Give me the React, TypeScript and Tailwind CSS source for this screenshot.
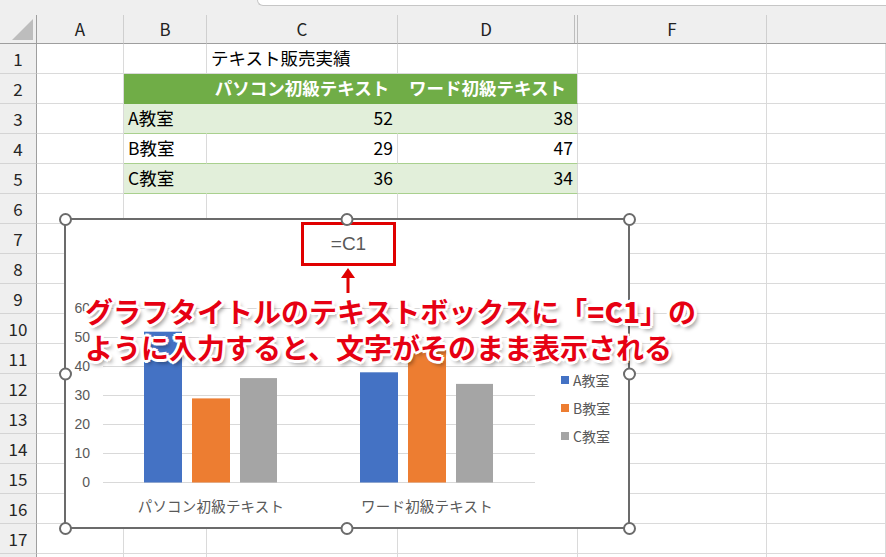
import React from "react";

// 列幅: 行見出し, A, B, C, D(+非表示E), F, G
const GRID = "grid grid-cols-[37px_87px_83px_191px_180px_189px_1fr]";
const JP = "font-['Noto_Sans_CJK_JP',sans-serif]";
const NUM = "font-['Liberation_Sans','Noto_Sans_CJK_JP',sans-serif]";

interface CellDef {
  text?: React.ReactNode;
  align?: "left" | "right" | "center";
  cls?: string;
}

const normal = "border-r border-b border-r-[#dadada] border-b-[#dadada]";
const greenHead =
  "border-r border-b border-r-[#70ad47] border-b-[#70ad47] bg-[#70ad47] text-white font-bold";
const greenHeadEnd =
  "border-r border-b border-r-[#dadada] border-b-[#70ad47] bg-[#70ad47] text-white font-bold";
const lightFill =
  "border-r border-b border-r-[#e2efda] border-b-[#a9d08e] bg-[#e2efda]";
const lightFillEnd =
  "border-r border-b border-r-[#dadada] border-b-[#a9d08e] bg-[#e2efda]";
const whiteRow = "border-r border-b border-r-[#dadada] border-b-[#a9d08e]";

const rows: Record<number, CellDef[]> = {
  1: [{}, {}, { text: "テキスト販売実績" }],
  2: [
    {},
    { cls: greenHead },
    { text: "パソコン初級テキスト", align: "center", cls: greenHead },
    { text: "ワード初級テキスト", align: "center", cls: greenHeadEnd },
  ],
  3: [
    {},
    { text: "A教室", cls: lightFill },
    { text: "52", align: "right", cls: lightFill },
    { text: "38", align: "right", cls: lightFillEnd },
  ],
  4: [
    {},
    { text: "B教室", cls: whiteRow },
    { text: "29", align: "right", cls: whiteRow },
    { text: "47", align: "right", cls: whiteRow },
  ],
  5: [
    {},
    { text: "C教室", cls: lightFill },
    { text: "36", align: "right", cls: lightFill },
    { text: "34", align: "right", cls: lightFillEnd },
  ],
};

const SheetRow = ({ n }: { n: number }) => {
  const defs = rows[n] ?? [];
  return (
    <div className={`${GRID} h-[30px]`}>
      <div className="flex items-center justify-center bg-[#efefef] border-r border-b border-r-[#9e9e9e] border-b-[#d4d4d4] text-[17px] text-[#262626]">
        {n}
      </div>
      {Array.from({ length: 6 }).map((_, i) => {
        const d = defs[i] ?? {};
        const align =
          d.align === "right"
            ? "justify-end pr-[4px]"
            : d.align === "center"
            ? "justify-center"
            : "justify-start pl-[4px]";
        return (
          <div
            key={i}
            className={`flex items-center whitespace-nowrap text-[17.5px] text-black ${align} ${d.cls ?? normal}`}>
            {d.text}
          </div>
        );
      })}
    </div>
  );
};

const ColumnHeader = () => (
  <div className={`${GRID} h-[29px] bg-[#efefef]`}>
    <div className="flex items-end justify-end pr-[3px] pb-[3px] border-r border-b border-r-[#9e9e9e] border-b-[#9e9e9e]">
      <svg width="21" height="21" viewBox="0 0 21 21">
        <polygon points="21,0 21,21 0,21" fill="#bdbdbd" />
      </svg>
    </div>
    {["A", "B", "C"].map((c) => (
      <div
        key={c}
        className="flex items-center justify-center border-r border-b border-r-[#cfcfcf] border-b-[#9e9e9e] text-[17px] text-[#222]">
        {c}
      </div>
    ))}
    {/* D と非表示の E */}
    <div className="flex border-r border-b border-r-[#bdbdbd] border-b-[#9e9e9e] text-[17px] text-[#222]">
      <div className="flex-1 flex items-center justify-center">D</div>
      <div className="w-px bg-[#bdbdbd]" />
      <div className="w-[2px]" />
    </div>
    <div className="flex items-center justify-center border-r border-b border-r-[#cfcfcf] border-b-[#9e9e9e] text-[17px] text-[#222]">
      F
    </div>
    <div className="border-b border-b-[#9e9e9e]" />
  </div>
);

const bars = [
  { x: 41, v: 52, c: "#4472c4" },
  { x: 89, v: 29, c: "#ed7d31" },
  { x: 137, v: 36, c: "#a5a5a5" },
  { x: 257, v: 38, c: "#4472c4" },
  { x: 305, v: 47, c: "#ed7d31" },
  { x: 353, v: 34, c: "#a5a5a5" },
];

const legend = [
  { label: "A教室", c: "bg-[#4472c4]" },
  { label: "B教室", c: "bg-[#ed7d31]" },
  { label: "C教室", c: "bg-[#a5a5a5]" },
];

const Handle = ({ pos }: { pos: string }) => (
  <div
    className={`absolute w-[13px] h-[13px] rounded-full border-2 border-[#6b6b6b] bg-white ${pos}`}
  />
);

const Chart = () => (
  <div className="absolute left-[64px] top-[218px] w-[566px] h-[311px] border-2 border-[#6b6b6b] bg-white">
    {/* グラフタイトル */}
    <div className="flex justify-center pt-[2px] pl-[3px]">
      <div className={`w-[95px] h-[44px] border-[3px] border-[#e00000] flex items-center justify-center text-[19px] text-[#595959] ${NUM}`}>
        =C1
      </div>
    </div>

    <div className="flex mt-[28px]">
      {/* 縦軸 */}
      <div className={`w-[24px] flex flex-col text-right text-[14px] text-[#595959] ${NUM}`}>
        {[60, 50, 40, 30, 20, 10, 0].map((v) => (
          <div key={v} className="h-[29px] leading-[29px]">
            {v}
          </div>
        ))}
      </div>
      <svg width="432" height="200" className="ml-[13px]">
        {[0, 1, 2, 3, 4, 5, 6].map((k) => (
          <line
            key={k}
            x1="0"
            x2="432"
            y1={14.5 + 29 * k}
            y2={14.5 + 29 * k}
            stroke="#d9d9d9"
            strokeWidth="1"
          />
        ))}
        {bars.map((b, i) => (
          <rect
            key={i}
            x={b.x}
            y={188.5 - b.v * 2.9}
            width={i % 3 === 2 ? 37 : 38}
            height={b.v * 2.9}
            fill={b.c}
          />
        ))}
      </svg>
      {/* 凡例 */}
      <div className={`ml-[26px] mt-[72px] flex flex-col ${JP}`}>
        {legend.map((l) => (
          <div key={l.label} className="h-[28px] flex items-center gap-[4px] text-[14px] text-[#595959]">
            <span className={`w-[8px] h-[8px] ${l.c}`} />
            <span>{l.label}</span>
          </div>
        ))}
      </div>
    </div>

    {/* 項目軸 */}
    <div className={`flex pl-[37px] text-[14.5px] text-[#595959] tracking-[0.2px] ${JP}`}>
      <div className="w-[216px] h-[18px] leading-[18px] text-center">パソコン初級テキスト</div>
      <div className="w-[216px] h-[18px] leading-[18px] text-center">ワード初級テキスト</div>
    </div>

    <Handle pos="left-[-7.5px] top-[-7.5px]" />
    <Handle pos="left-1/2 -translate-x-1/2 top-[-7.5px]" />
    <Handle pos="right-[-7.5px] top-[-7.5px]" />
    <Handle pos="left-[-7.5px] top-1/2 -translate-y-1/2" />
    <Handle pos="right-[-7.5px] top-1/2 -translate-y-1/2" />
    <Handle pos="left-[-7.5px] bottom-[-7.5px]" />
    <Handle pos="left-1/2 -translate-x-1/2 bottom-[-7.5px]" />
    <Handle pos="right-[-7.5px] bottom-[-7.5px]" />
  </div>
);

const outline =
  "[text-shadow:-2px_-2px_0_#fff,2px_-2px_0_#fff,-2px_2px_0_#fff,2px_2px_0_#fff,0_-3px_0_#fff,0_3px_0_#fff,-3px_0_0_#fff,3px_0_0_#fff,3px_4px_4px_rgba(0,0,0,0.45)]";

export default function App() {
  return (
    <div className={`relative w-[886px] h-[557px] overflow-hidden bg-white ${JP}`}>
      {/* 数式バーの下端 */}
      <div className="h-[15px] flex bg-[#efefef]">
        <div className="w-[257px]" />
        <div className="flex-1 h-[6px] bg-white border-l border-b border-[#c6c6c6] rounded-bl-[6px]" />
      </div>
      <ColumnHeader />
      {Array.from({ length: 17 }).map((_, i) => (
        <SheetRow key={i} n={i + 1} />
      ))}
      <div className={`${GRID} h-[30px]`}>
        <div className="bg-[#efefef] border-r border-r-[#9e9e9e]" />
        {Array.from({ length: 6 }).map((_, i) => (
          <div key={i} className="border-r border-r-[#dadada]" />
        ))}
      </div>

      <Chart />

      {/* 注釈の矢印 */}
      <svg className="absolute left-[341px] top-[266px]" width="14" height="28" viewBox="0 0 14 28">
        <polygon points="7,2 0,12 14,12" fill="#e00000" />
        <rect x="5.5" y="11" width="3" height="16" fill="#e00000" />
      </svg>

      {/* 注釈テキスト */}
      <div
        className={`absolute left-[85px] top-[293px] whitespace-nowrap text-[28px] leading-[36px] font-bold text-[#e60012] ${outline}`}>
        <div>
          グラフタイトルのテキストボックスに「<span className="font-black">=C1</span>」の
        </div>
        <div>ように入力すると、文字がそのまま表示される</div>
      </div>
    </div>
  );
}
